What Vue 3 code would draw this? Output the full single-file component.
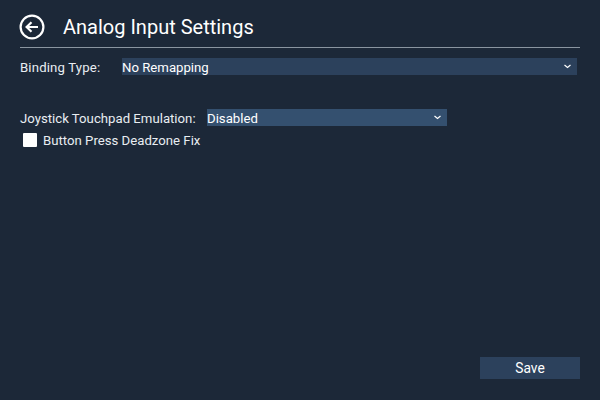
<template>
  <div class="page">
    <header class="header">
      <svg class="back" width="26" height="26" viewBox="0 0 26 26" fill="none" stroke="#fff">
        <circle cx="13" cy="13" r="11.4" stroke-width="2.2" />
        <path d="M19 13H8M12.5 8.2L7.6 13l4.9 4.8" stroke-width="2.2" />
      </svg>
      <h1 class="title">Analog Input Settings</h1>
    </header>

    <div class="row binding">
      <span class="label">Binding Type:</span>
      <div class="select">
        <span>No Remapping</span>
        <svg class="chevron" width="7" height="5" viewBox="0 0 7 5" fill="none" stroke="#fff">
          <path d="M0.5 1l3 2.5 3-2.5" stroke-width="1.2" />
        </svg>
      </div>
    </div>

    <div class="row joystick">
      <span class="label">Joystick Touchpad Emulation:</span>
      <div class="select light">
        <span>Disabled</span>
        <svg class="chevron" width="7" height="5" viewBox="0 0 7 5" fill="none" stroke="#fff">
          <path d="M0.5 1l3 2.5 3-2.5" stroke-width="1.2" />
        </svg>
      </div>
    </div>

    <label class="check">
      <span class="box"></span>
      <span>Button Press Deadzone Fix</span>
    </label>

    <div class="footer">
      <button class="save">Save</button>
    </div>
  </div>
</template>

<script setup>
</script>

<style>
body {
  background: #1c2838;
}
</style>

<style scoped>
.page {
  width: 600px;
  height: 400px;
  box-sizing: border-box;
  padding: 0 20px 21px;
  display: flex;
  flex-direction: column;
  background: #1c2838;
  color: #e8edf2;
  font-family: Roboto, sans-serif;
  font-size: 13.2px;
}

.header {
  height: 48px;
  box-sizing: border-box;
  padding-top: 6px;
  display: flex;
  align-items: center;
  gap: 18px;
  border-bottom: 1px solid #8a95a0;
}

.back {
  margin-left: -1px;
}

.title {
  margin: 0;
  font-size: 20px;
  font-weight: 400;
  color: #fff;
}

.row {
  display: flex;
  align-items: center;
  height: 17px;
}

.label {
  padding-top: 1px;
}

.binding {
  margin-top: 10px;
}

.binding .label {
  width: 102px;
  letter-spacing: 0.15px;
}

.binding .select {
  width: 455px;
}

.joystick {
  margin-top: 34px;
}

.joystick .label {
  width: 187px;
}

.joystick .select {
  width: 240px;
}

.select {
  height: 17px;
  display: flex;
  align-items: center;
  justify-content: space-between;
  box-sizing: border-box;
  padding: 1px 6px 0 0;
  background: #2c415c;
  color: #fff;
}

.chevron {
  margin-top: -1px;
}

.select.light {
  background: #34506f;
}

.check {
  display: flex;
  align-items: center;
  gap: 6px;
  margin-top: 6px;
  margin-left: 3px;
  height: 16px;
}

.box {
  width: 14px;
  height: 14px;
  background: #fff;
  border-radius: 1px;
}

.footer {
  margin-top: auto;
  display: flex;
  justify-content: flex-end;
}

.save {
  width: 100px;
  height: 22px;
  padding: 0;
  border: 0;
  background: #2c415c;
  color: #fff;
  font: inherit;
  font-size: 13.8px;
}
</style>
